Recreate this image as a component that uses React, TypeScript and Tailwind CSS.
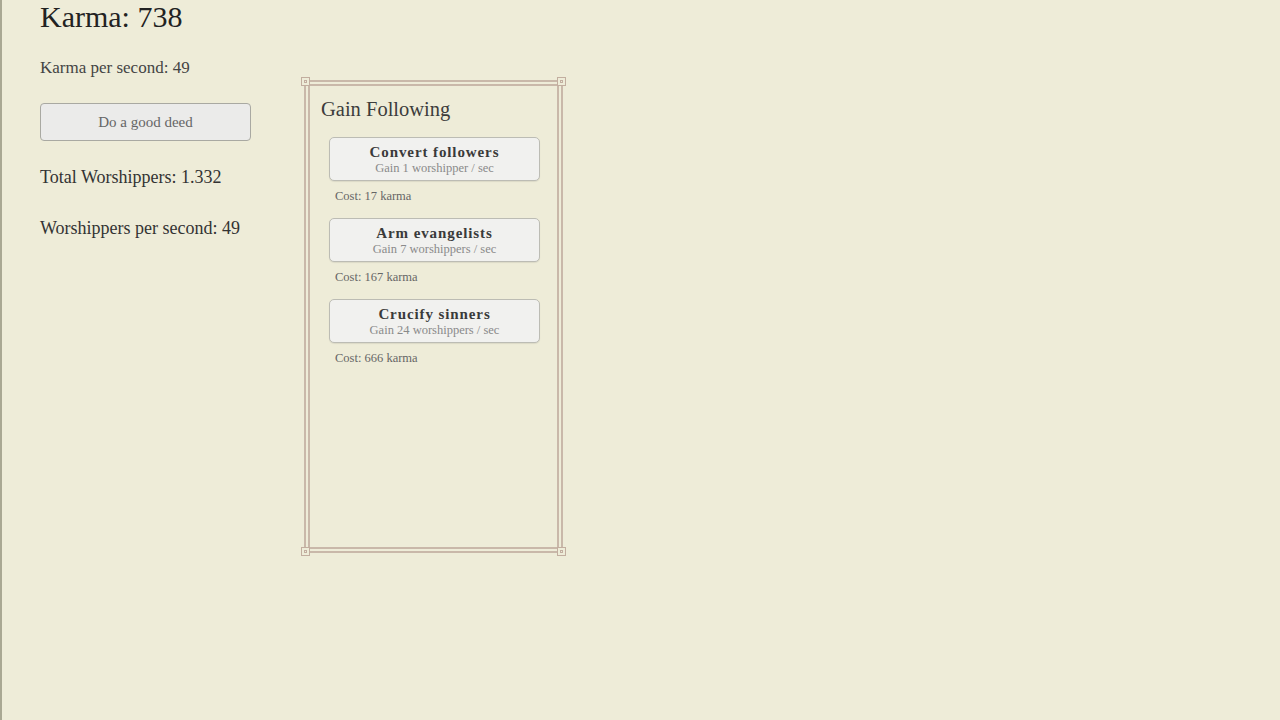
import React from 'react'

const serif = { fontFamily: '"Liberation Serif", "DejaVu Serif", serif' }

type Upgrade = { name: string; gain: string; cost: number }

const upgrades: Upgrade[] = [
  { name: 'Convert followers', gain: 'Gain 1 worshipper / sec', cost: 17 },
  { name: 'Arm evangelists', gain: 'Gain 7 worshippers / sec', cost: 167 },
  { name: 'Crucify sinners', gain: 'Gain 24 worshippers / sec', cost: 666 },
]

// small square ornament sitting on each corner of the frame
const Corner: React.FC<{ className: string }> = ({ className }) => (
  <span className={`absolute w-[9px] h-[9px] border border-[#c2ae9f] bg-[#eeecd8] ${className}`}>
    <span className="absolute inset-[2px] border border-[#c2ae9f]" />
  </span>
)

const UpgradeItem: React.FC<{ item: Upgrade }> = ({ item }) => (
  <div className="flex flex-col gap-[8px]">
    <button className="w-[211px] h-[44px] flex flex-col items-center justify-center rounded-[5px] border border-[#bcbcb4] bg-[#f1f1ef] shadow-[0_1px_1px_rgba(0,0,0,0.08)]">
      <span className="text-[15px] leading-[18px] font-bold tracking-[0.06em] text-[#3a3a3a]">{item.name}</span>
      <span className="text-[12.5px] leading-[15px] text-[#8a8a8a]">{item.gain}</span>
    </button>
    <div className="pl-[6px] text-[12.5px] leading-[15px] text-[#666]">Cost: {item.cost} karma</div>
  </div>
)

const GainFollowingPanel: React.FC = () => (
  <div className="relative mt-[80px] w-[259px] h-[473px] border-2 border-[#c9b8a9] p-[2px]">
    <Corner className="-left-[5px] -top-[5px]" />
    <Corner className="-right-[5px] -top-[5px]" />
    <Corner className="-left-[5px] -bottom-[5px]" />
    <Corner className="-right-[5px] -bottom-[5px]" />
    <div className="h-full border-2 border-[#c9b8a9] pl-[11px] pt-[10px] flex flex-col gap-[15px]">
      <h2 className="text-[20.5px] leading-[26px] text-[#3c3c3c]">Gain Following</h2>
      <div className="pl-[8px] flex flex-col gap-[14px]">
        {upgrades.map((u) => (
          <UpgradeItem key={u.name} item={u} />
        ))}
      </div>
    </div>
  </div>
)

export default function App() {
  return (
    <div style={serif} className="min-h-screen bg-[#eeecd8] border-l-2 border-[#a9a893] flex items-start pl-[38px] gap-[52px]">
      <div className="w-[212px] flex flex-col items-start">
        <h1 className="text-[30px] leading-[34px] text-[#222]">Karma: 738</h1>
        <p className="mt-[24px] text-[17px] leading-[20px] text-[#444]">Karma per second: 49</p>
        <button className="mt-[25px] w-[211px] h-[38px] rounded-[4px] border border-[#a9a9a2] bg-[#ebebea] text-[15px] text-[#666]">
          Do a good deed
        </button>
        <p className="mt-[25px] text-[18px] leading-[22px] text-[#333]">Total Worshippers: 1.332</p>
        <p className="mt-[29px] text-[18px] leading-[22px] text-[#333]">Worshippers per second: 49</p>
      </div>
      <GainFollowingPanel />
    </div>
  )
}
